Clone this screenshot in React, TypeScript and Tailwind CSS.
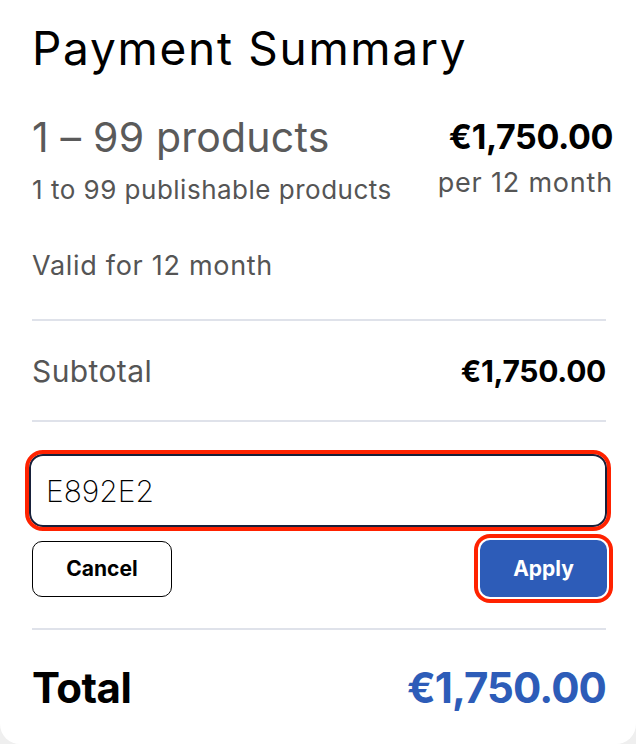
import React from 'react';

export default function App() {
	return (
		<div className="min-h-[744px] bg-[#efefef]" style={{ fontFamily: 'Inter, "Liberation Sans", sans-serif' }}>
			<div className="h-[744px] rounded-b-[20px] bg-white pl-8 pr-[30px] pt-[22px]">
				<h1 className="text-[46px] leading-[52px] tracking-[1.7px] text-black">Payment Summary</h1>

				<div className="-mr-[7px] mt-[40px] flex items-start justify-between">
					<div>
						<div className="text-[41px] leading-[46px] tracking-[0.2px] text-[#5a5a5a]">1 – 99 products</div>
						<div className="mt-[15px] text-[26px] leading-[30px] tracking-[0.5px] text-[#555]">1 to 99 publishable products</div>
					</div>
					<div className="text-right">
						<div className="text-[34px] font-bold leading-[46px] tracking-[-0.4px] text-black">€1,750.00</div>
						<div className="mt-[8px] text-[27px] leading-[30px] tracking-[0.8px] text-[#555]">per 12 month</div>
					</div>
				</div>

				<div className="mt-[45px] text-[27px] leading-[32px] tracking-[0.7px] text-[#555]">Valid for 12 month</div>

				<div className="mt-[37px] h-[2px] bg-[#dfe2ea]" />

				<div className="flex h-[99px] items-center justify-between">
					<span className="text-[30px] leading-[36px] tracking-[0.4px] text-[#555]">Subtotal</span>
					<span className="text-[30px] font-bold leading-[36px] tracking-[-0.3px] text-black">€1,750.00</span>
				</div>

				<div className="h-[2px] bg-[#dfe2ea]" />

				<input
					readOnly
					value="E892E2"
					className="-ml-[3px] mt-[32px] block h-[73px] w-[578px] rounded-[14px] border-2 border-[#17203a] bg-white px-[15px] text-[30px] font-extralight text-black outline-4 outline-[#ff2200]"
				/>

				<div className="-mr-[1px] mt-[13px] flex items-center justify-between">
					<button className="h-[56px] w-[140px] rounded-[10px] border border-black bg-white text-[21px] font-bold text-black">
						Cancel
					</button>
					<button className="h-[57px] w-[127px] rounded-[10px] bg-[#2d5cb8] text-[21px] font-bold text-white ring-4 ring-[#ff2200] ring-offset-2">
						Apply
					</button>
				</div>

				<div className="mt-[31px] h-[2px] bg-[#dfe2ea]" />

				<div className="flex items-center justify-between pt-[34px]">
					<span className="text-[42px] font-bold leading-[48px] tracking-[-0.5px] text-black">Total</span>
					<span className="text-[42px] font-bold leading-[48px] tracking-[-0.9px] text-[#2d5cb8]">€1,750.00</span>
				</div>
			</div>
		</div>
	);
}
